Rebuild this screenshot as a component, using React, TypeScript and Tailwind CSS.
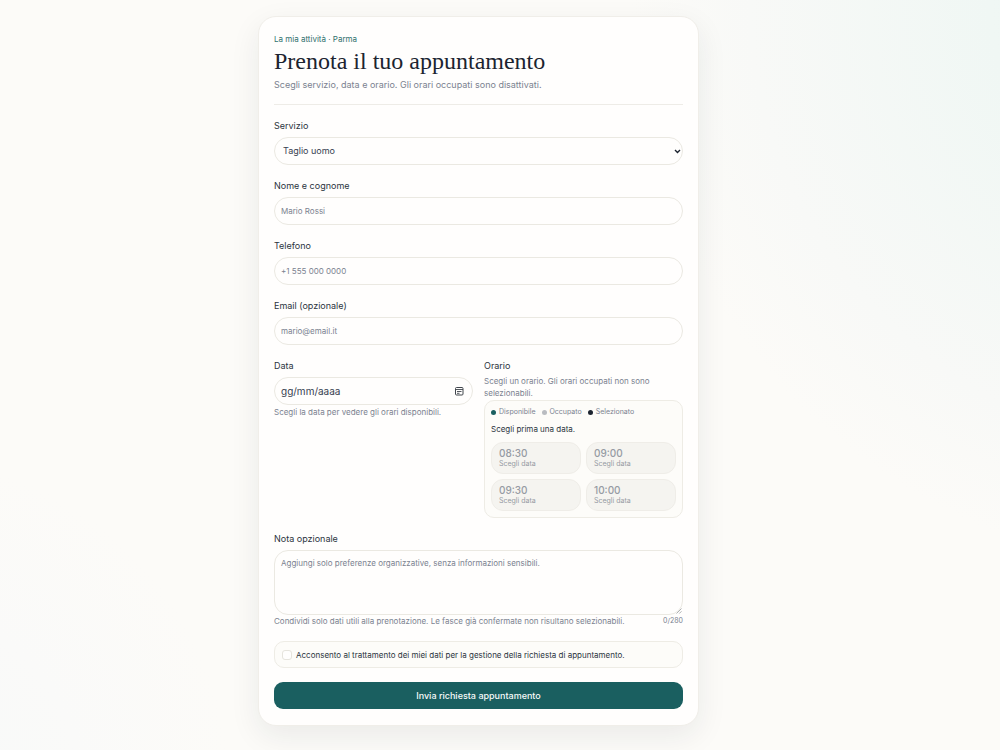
import { useState, type ReactNode } from "react";

const sans = "font-['Inter','Liberation_Sans',sans-serif]";
const fieldBase =
  "w-full rounded-[14px] border border-[#ebe9e2] bg-[#fffefd] text-[#374151] outline-none focus:border-[#1a5f60]";
const inputClass = `${fieldBase} h-7 px-[6px] text-[8px] placeholder:text-[#7b8290]`;
const hintClass = "text-[8px] leading-3 text-[#7b8290]";

const slots = ["08:30", "09:00", "09:30", "10:00"];

const legend = [
  { label: "Disponibile", dot: "bg-[#1a5f60]" },
  { label: "Occupato", dot: "bg-[#b9bcc1]" },
  { label: "Selezionato", dot: "bg-[#1c2430]" },
];

function Field({ id, label, children }: { id: string; label: string; children: ReactNode }) {
  return (
    <div className="flex flex-col">
      <label htmlFor={id} className="mb-1 text-[9px] leading-[14px] text-[#2b3440]">
        {label}
      </label>
      {children}
    </div>
  );
}

function CalendarIcon() {
  return (
    <svg viewBox="0 0 10 10" className="size-[10px]" fill="none" stroke="#41464d" aria-hidden="true">
      <rect x="1.5" y="1.5" width="7.5" height="7.5" rx="1" />
      <path d="M1.5 3.5H9M3 5.5h4.5M3 7.3h2.5" strokeWidth="0.9" />
    </svg>
  );
}

export default function App() {
  const [note, setNote] = useState("");

  return (
    <div
      className={`min-h-screen bg-[#fcfbf8] bg-[radial-gradient(circle_at_120%_0,#e9f5f2_0,#f0f7f4_210px,#f8f9f7_450px,transparent_570px),radial-gradient(circle_at_-10%_105%,#f7f9f9_0,#fafaf9_180px,transparent_330px)] pt-4 pr-[43px] pb-6 ${sans}`}
    >
      <main className="mx-auto w-full max-w-[441px] rounded-[18px] border border-[#f0eee9] bg-[#fffefd] px-[15px] py-4 shadow-[0_10px_30px_rgba(31,41,55,0.08)]">
        <header className="border-b border-[#eeece7] pb-[13px]">
          <p className="text-[8px] leading-3 text-[#2f706d]">La mia attività · Parma</p>
          <h1 className="mt-[3px] font-['Liberation_Serif',serif] text-[24px] leading-[26px] text-[#1c2430]">
            Prenota il tuo appuntamento
          </h1>
          <p className="mt-[5px] text-[9px] leading-3 text-[#7b8290]">
            Scegli servizio, data e orario. Gli orari occupati sono disattivati.
          </p>
        </header>

        <form className="mt-[14px] flex flex-col gap-[14px]" onSubmit={(e) => e.preventDefault()}>
          <Field id="service" label="Servizio">
            <div className="relative">
              <select id="service" className={`${fieldBase} block h-7 appearance-none pr-4 pl-2 text-[9px]`}>
                <option>Taglio uomo</option>
              </select>
              <svg
                viewBox="0 0 7 5"
                className="pointer-events-none absolute top-3 right-[2px] h-[5px] w-[7px]"
                fill="none"
                stroke="#1c2430"
                strokeWidth="1.4"
                aria-hidden="true"
              >
                <path d="M1 1l2.5 2.5L6 1" />
              </svg>
            </div>
          </Field>
          <Field id="name" label="Nome e cognome">
            <input id="name" type="text" placeholder="Mario Rossi" className={inputClass} />
          </Field>
          <Field id="phone" label="Telefono">
            <input id="phone" type="tel" placeholder="+1 555 000 0000" className={inputClass} />
          </Field>
          <Field id="email" label="Email (opzionale)">
            <input id="email" type="email" placeholder="mario@email.it" className={inputClass} />
          </Field>

          <div className="grid grid-cols-2 items-start gap-[11px]">
            <Field id="date" label="Data">
              <div className={`${fieldBase} flex h-7 items-center pr-2 pl-[6px]`}>
                <input
                  id="date"
                  type="text"
                  inputMode="numeric"
                  placeholder="gg/mm/aaaa"
                  className="min-w-0 flex-1 bg-transparent text-[10px] outline-none placeholder:text-[#374151]"
                />
                <button type="button" aria-label="Apri calendario">
                  <CalendarIcon />
                </button>
              </div>
              <p className={`mt-[1px] ${hintClass}`}>Scegli la data per vedere gli orari disponibili.</p>
            </Field>

            <fieldset className="min-w-0">
              <legend className="text-[9px] leading-[14px] text-[#2b3440]">Orario</legend>
              <p className={`mt-[2px] ${hintClass}`}>Scegli un orario. Gli orari occupati non sono selezionabili.</p>
              <div className="mt-[1px] rounded-[10px] border border-[#eeece5] bg-[#fdfcf9] p-[6px]">
                <ul className="flex gap-[6px] text-[7px] leading-[10px] text-[#7b8290]">
                  {legend.map((item) => (
                    <li key={item.label} className="flex items-center gap-[3px]">
                      <span className={`size-[5px] rounded-full ${item.dot}`} />
                      {item.label}
                    </li>
                  ))}
                </ul>
                <p className="mt-[6px] text-[8px] leading-3 text-[#2b3440]">Scegli prima una data.</p>
                <div className="mt-[7px] grid grid-cols-2 gap-[5px]">
                  {slots.map((time) => (
                    <button
                      key={time}
                      type="button"
                      disabled
                      className="flex h-8 flex-col justify-center rounded-xl border border-[#efede8] bg-[#f5f4f0] px-[7px] text-left text-[#969ba3]"
                    >
                      <span className="text-[10px] leading-3 font-medium">{time}</span>
                      <span className="text-[7px] leading-[10px]">Scegli data</span>
                    </button>
                  ))}
                </div>
              </div>
            </fieldset>
          </div>

          <Field id="note" label="Nota opzionale">
            <div className="relative">
              <textarea
                id="note"
                maxLength={280}
                value={note}
                onChange={(e) => setNote(e.target.value)}
                placeholder="Aggiungi solo preferenze organizzative, senza informazioni sensibili."
                className={`${fieldBase} block h-[65px] resize-none px-[6px] py-[6px] text-[8px] leading-3 placeholder:text-[#7b8290]`}
              />
              <svg
                viewBox="0 0 6 6"
                className="pointer-events-none absolute right-[1px] bottom-[1px] size-[6px]"
                fill="none"
                stroke="#8b8f94"
                strokeWidth="0.7"
                aria-hidden="true"
              >
                <path d="M.5 5.5l5-5M3.3 5.5l2.2-2.2" />
              </svg>
            </div>
            <div className={`flex justify-between ${hintClass}`}>
              <p>Condividi solo dati utili alla prenotazione. Le fasce già confermate non risultano selezionabili.</p>
              <span className="text-[7px]">{note.length}/280</span>
            </div>
          </Field>

          <label className="flex h-[27px] items-center gap-1 rounded-[10px] border border-[#eeece5] bg-[#fdfcf9] px-[7px] text-[8px] text-[#2b3440]">
            <input
              type="checkbox"
              className="size-[10px] appearance-none rounded-[3px] border border-[#e6e4dd] bg-[#fffefd] checked:bg-[#1a5f60]"
            />
            Acconsento al trattamento dei miei dati per la gestione della richiesta di appuntamento.
          </label>

          <button type="submit" className="h-[27px] rounded-[9px] bg-[#1a5f60] text-[9px] font-medium text-[#f7faf9]">
            Invia richiesta appuntamento
          </button>
        </form>
      </main>
    </div>
  );
}
